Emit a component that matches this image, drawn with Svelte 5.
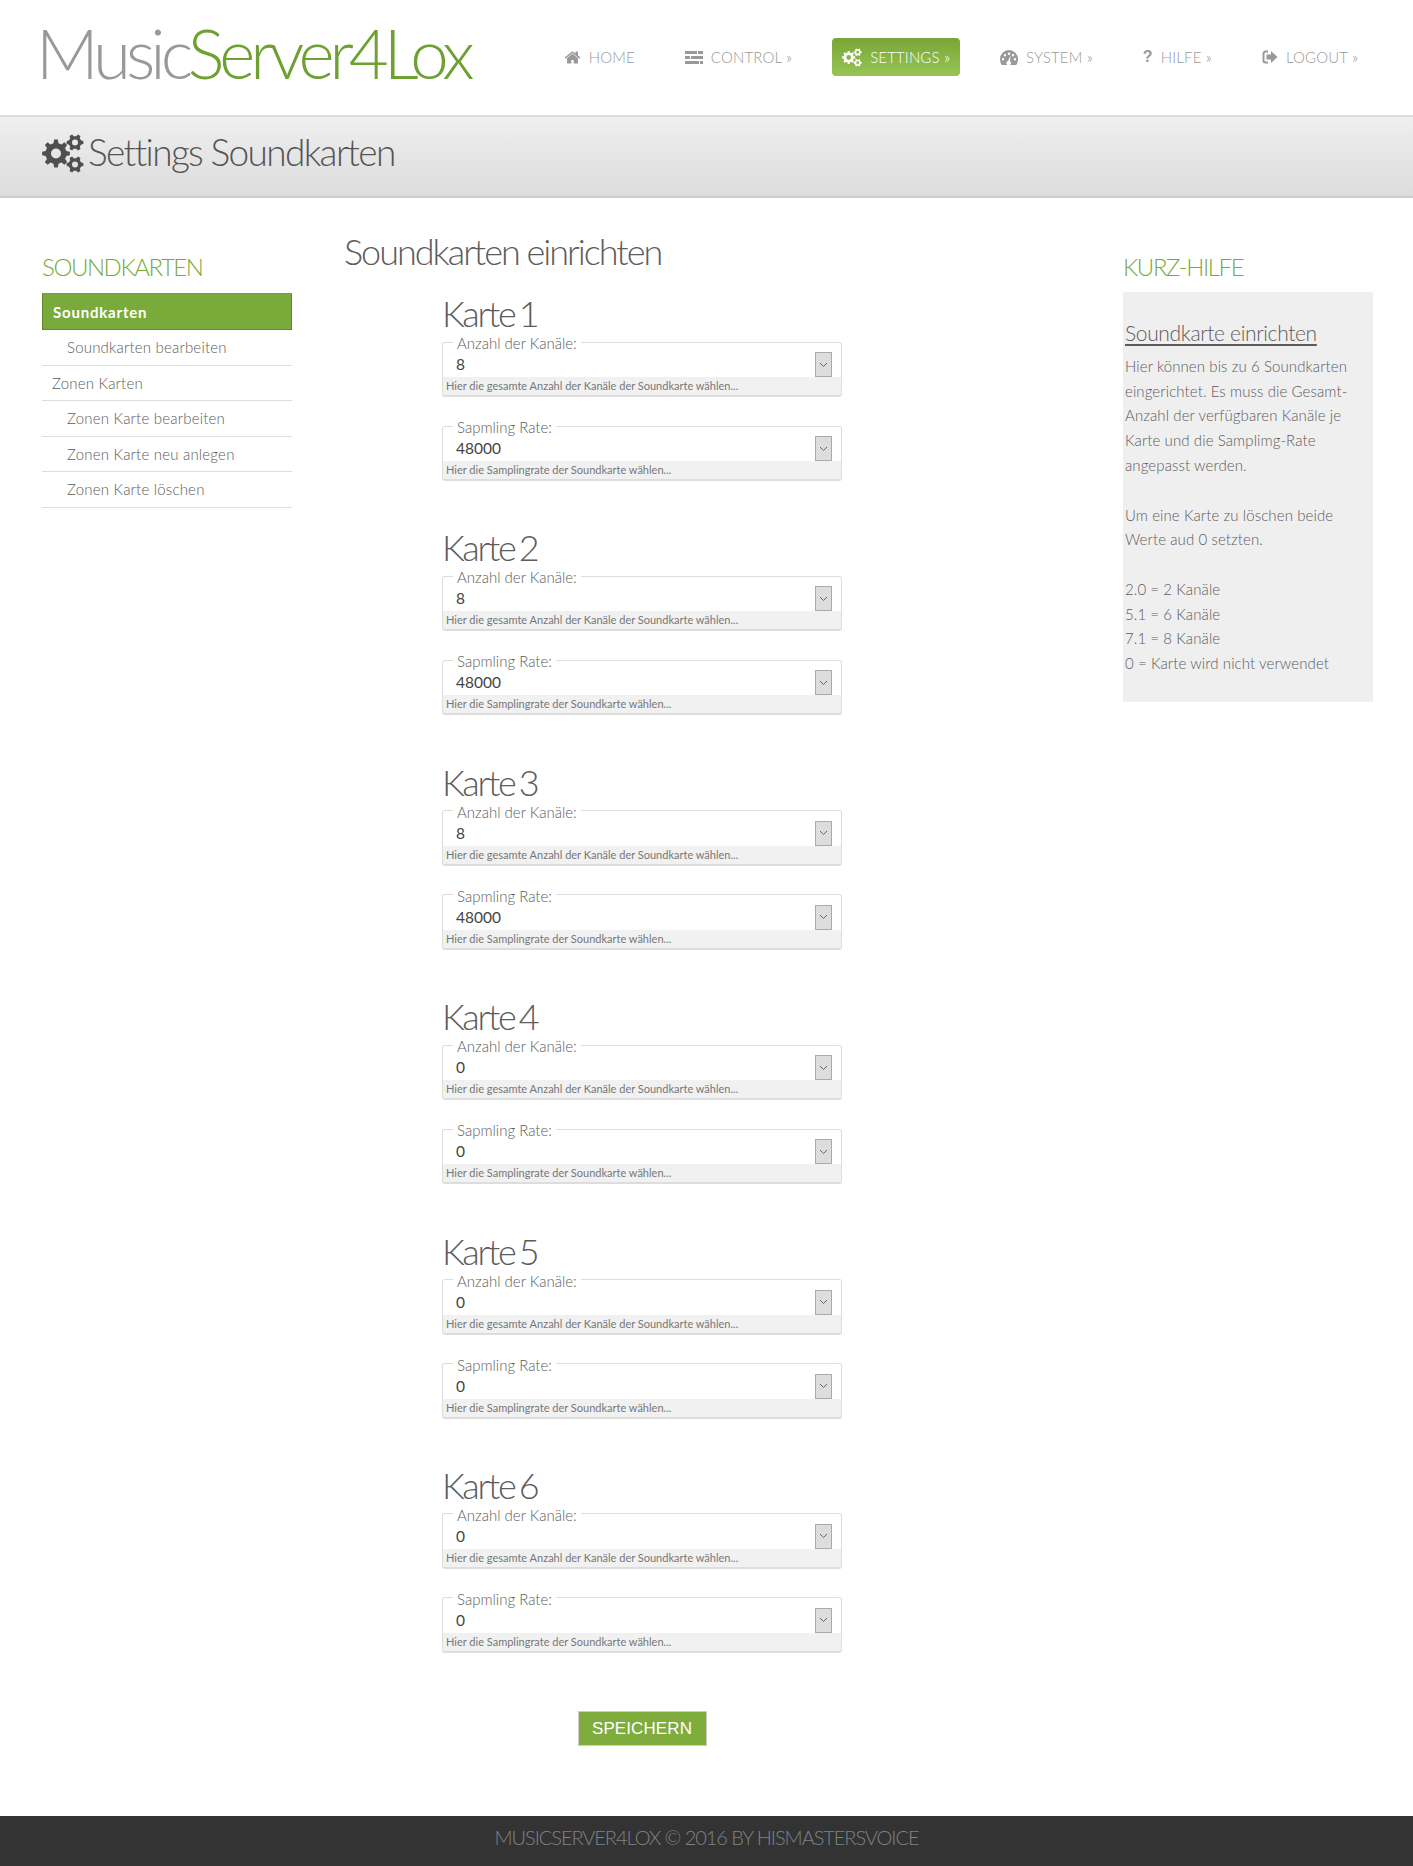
<script>
  const nav = [
    { label: 'HOME', icon: 'home' },
    { label: 'CONTROL »', icon: 'tasks' },
    { label: 'SETTINGS »', icon: 'cogs', active: true },
    { label: 'SYSTEM »', icon: 'dash' },
    { label: 'HILFE »', icon: 'help' },
    { label: 'LOGOUT »', icon: 'out' }
  ];

  const side = [
    { label: 'Soundkarten', cls: 'active' },
    { label: 'Soundkarten bearbeiten', cls: 'sub' },
    { label: 'Zonen Karten', cls: '' },
    { label: 'Zonen Karte bearbeiten', cls: 'sub' },
    { label: 'Zonen Karte neu anlegen', cls: 'sub' },
    { label: 'Zonen Karte löschen', cls: 'sub' }
  ];

  const cards = [
    { n: 1, ch: '8', rate: '48000' },
    { n: 2, ch: '8', rate: '48000' },
    { n: 3, ch: '8', rate: '48000' },
    { n: 4, ch: '0', rate: '0' },
    { n: 5, ch: '0', rate: '0' },
    { n: 6, ch: '0', rate: '0' }
  ];

  // gear outline with a round hole, used for the cogs icon
  function gear(cx, cy, r, hole, teeth = 8) {
    let d = '';
    const step = (Math.PI * 2) / teeth;
    for (let i = 0; i < teeth; i++) {
      const a = i * step;
      const pts = [
        [a - step * 0.3, r * 0.76],
        [a - step * 0.17, r],
        [a + step * 0.17, r],
        [a + step * 0.3, r * 0.76]
      ];
      for (const [t, l] of pts) {
        d += (d ? 'L' : 'M') + (cx + Math.cos(t) * l).toFixed(2) + ' ' + (cy + Math.sin(t) * l).toFixed(2);
      }
    }
    d += 'Z';
    d += `M${cx - hole} ${cy}a${hole} ${hole} 0 1 0 ${hole * 2} 0a${hole} ${hole} 0 1 0 ${-hole * 2} 0Z`;
    return d;
  }

  const cogs = gear(14, 19.5, 14, 5) + gear(33, 8.5, 8.5, 3, 6) + gear(33, 30.5, 8.5, 3, 6);
</script>

{#snippet icon(name)}
  {#if name === 'home'}
    <svg class="ico" viewBox="0 0 1792 1792" width="17" height="17"><path d="M1472 992v480q0 26-19 45t-45 19h-384v-384h-256v384h-384q-26 0-45-19t-19-45v-480q0-1 .5-3t.5-3l575-474 575 474q1 2 1 6zm223-69l-62 74q-8 9-21 11h-3q-13 0-21-7l-692-577-692 577q-12 8-24 7-13-2-21-11l-62-74q-8-10-7-23.500t11-21.500l719-599q32-26 76-26t76 26l244 204v-195q0-14 9-23t23-9h192q14 0 23 9t9 23v408l219 182q10 8 11 21.500t-7 23.500z"/></svg>
  {:else if name === 'tasks'}
    <svg class="ico" viewBox="0 0 18 13" width="18" height="13"><path d="M0 0h12v3H0zM13 0h5v3h-5zM0 5h5v3H0zM6 5h12v3H6zM0 10h14v3H0zM15 10h3v3h-3z"/></svg>
  {:else if name === 'cogs'}
    <svg class="ico" viewBox="0 0 42 39" width="20" height="19"><path fill-rule="evenodd" d={cogs}/></svg>
  {:else if name === 'dash'}
    <svg class="ico" viewBox="0 0 18 15" width="18" height="15"><path fill-rule="evenodd" d="M9 0a9 9 0 0 1 9 9c0 2.200-.6 4.300-1.800 6H1.800C.6 13.300 0 11.200 0 9a9 9 0 0 1 9-9zM3 8a1.200 1.200 0 1 0 0 2.400A1.200 1.200 0 0 0 3 8zm2-4a1.200 1.200 0 1 0 0 2.400A1.200 1.200 0 0 0 5 4zm4-1.500a1.200 1.200 0 1 0 0 2.400 1.200 1.200 0 0 0 0-2.400zM13 4a1.200 1.200 0 1 0 0 2.400A1.200 1.200 0 0 0 13 4zm2 4a1.200 1.200 0 1 0 0 2.400A1.200 1.200 0 0 0 15 8zM10.500 5.500L8 11a2.200 2.200 0 1 0 2 .3z"/></svg>
  {:else if name === 'help'}
    <span class="qmark">?</span>
  {:else if name === 'out'}
    <svg class="ico" viewBox="0 0 16 14" width="16" height="14"><path d="M6 1.500H3.500A2 2 0 0 0 1.500 3.500v7a2 2 0 0 0 2 2H6" fill="none" stroke="currentColor" stroke-width="2"/><path d="M4.500 4.500H9V1l6.500 6L9 13V9.500H4.500z"/></svg>
  {/if}
{/snippet}

{#snippet field(label, value, hint)}
  <fieldset>
    <legend>{label}</legend>
    <div class="select">
      <select><option>{value}</option></select>
      <span class="arrow">
        <svg viewBox="0 0 9 6" width="9" height="6"><path d="M1 1l3.500 3.500L8 1" fill="none" stroke="#666" stroke-width="1"/></svg>
      </span>
    </div>
    <div class="hint">{hint}</div>
  </fieldset>
{/snippet}

<header>
  <div class="logo">Music<span>Server4Lox</span></div>
  <nav>
    {#each nav as item}
      <a href="#top" class:active={item.active}>
        <span class="slot">{@render icon(item.icon)}</span>
        {item.label}
      </a>
    {/each}
  </nav>
</header>

<div class="titlebar">
  <svg viewBox="0 0 42 39" width="42" height="39"><path fill-rule="evenodd" d={cogs}/></svg>
  <h1>Settings Soundkarten</h1>
</div>

<main>
  <aside class="left">
    <h3>SOUNDKARTEN</h3>
    <ul>
      {#each side as row}
        <li class={row.cls}>{row.label}</li>
      {/each}
    </ul>
  </aside>

  <section class="content">
    <h2>Soundkarten einrichten</h2>
    <form>
      {#each cards as card}
        <div class="card">
          <h4>Karte {card.n}</h4>
          {@render field('Anzahl der Kanäle:', card.ch, 'Hier die gesamte Anzahl der Kanäle der Soundkarte wählen...')}
          {@render field('Sapmling Rate:', card.rate, 'Hier die Samplingrate der Soundkarte wählen...')}
        </div>
      {/each}
      <div class="actions"><button type="button">SPEICHERN</button></div>
    </form>
  </section>

  <aside class="right">
    <h3>KURZ-HILFE</h3>
    <div class="helpbox">
      <h5>Soundkarte einrichten</h5>
      <p>Hier können bis zu 6 Soundkarten eingerichtet. Es muss die Gesamt-Anzahl der verfügbaren Kanäle je Karte und die Samplimg-Rate angepasst werden.</p>
      <p>Um eine Karte zu löschen beide Werte aud 0 setzten.</p>
      <p>2.0 = 2 Kanäle<br />5.1 = 6 Kanäle<br />7.1 = 8 Kanäle<br />0 = Karte wird nicht verwendet</p>
    </div>
  </aside>
</main>

<footer>MUSICSERVER4LOX © 2016 BY HISMASTERSVOICE</footer>

<style>
  :global(body) {
    background: #fff;
    color: #5c5c5c;
    font-family: Lato, "Liberation Sans", sans-serif;
    font-weight: 300;
  }
  header {
    height: 115px;
    display: flex;
    align-items: center;
    justify-content: space-between;
    padding: 0 45px 0 36px;
  }
  .logo {
    font-size: 69px;
    letter-spacing: -5px;
    color: #999;
    line-height: 1;
    margin-top: -10px;
  }
  .logo span {
    color: #6fa032;
  }
  nav {
    display: flex;
    align-items: center;
    gap: 30px;
    margin-top: -1px;
  }
  nav a {
    display: flex;
    align-items: center;
    height: 38px;
    padding: 0 10px;
    border-radius: 4px;
    color: #999;
    font-size: 15px;
    letter-spacing: 0.15px;
    text-decoration: none;
    white-space: nowrap;
  }
  nav a.active {
    color: #fff;
    background: linear-gradient(#78a738, #96c554);
  }
  .slot {
    display: flex;
    align-items: center;
    margin-right: 8px;
  }
  .ico {
    fill: currentColor;
    display: block;
  }
  .qmark {
    font: bold 16px "Liberation Sans", sans-serif;
    width: 10px;
    text-align: center;
  }
  .titlebar {
    height: 79px;
    box-sizing: content-box;
    border-top: 2px solid #ddd;
    border-bottom: 2px solid #ccc;
    background: linear-gradient(#efefef, #dcdcdc);
    display: flex;
    align-items: center;
    padding-left: 42px;
    gap: 4px;
    color: #555;
  }
  .titlebar svg {
    fill: #4f4f4f;
    margin-top: -6px;
  }
  h1 {
    margin: -11px 0 0;
    font-size: 37px;
    font-weight: 300;
    letter-spacing: -1.65px;
    color: #555;
  }
  main {
    display: flex;
    align-items: flex-start;
    padding: 0 40px 0 42px;
  }
  .left {
    width: 250px;
    flex: none;
    margin-top: 51px;
  }
  h3 {
    margin: 0;
    height: 44px;
    font-size: 24px;
    font-weight: 300;
    line-height: 36px;
    letter-spacing: -1.45px;
    color: #7aaa3a;
  }
  ul {
    list-style: none;
    margin: 0;
    padding: 0;
  }
  li {
    height: 35.6px;
    box-sizing: border-box;
    padding-left: 10px;
    border-bottom: 1px solid #ddd;
    font-size: 15px;
    line-height: 35px;
    letter-spacing: 0.2px;
  }
  li.sub {
    padding-left: 25px;
  }
  li.active {
    height: 37px;
    border: 1px solid #5f8a2c;
    border-top-color: #888;
    background: #7aaa3a;
    color: #fff;
    font-weight: 700;
    font-size: 15px;
    line-height: 36px;
    letter-spacing: 0.8px;
  }
  .content {
    flex: none;
    width: 779px;
    margin-left: 52px;
  }
  h2 {
    margin: 31px 0 16px;
    font-size: 36px;
    font-weight: 300;
    line-height: 44px;
    letter-spacing: -2px;
  }
  form {
    width: 400px;
    margin-left: 98px;
  }
  .card {
    padding-bottom: 42.4px;
  }
  h4 {
    margin: 0 0 -2px;
    padding-top: 2px;
    font-size: 36px;
    font-weight: 300;
    line-height: 44px;
    letter-spacing: -2.3px;
    word-spacing: -3px;
  }
  fieldset {
    margin: 0;
    padding: 0;
    border: 1px solid #ddd;
    border-bottom-width: 2px;
    border-radius: 3px;
    min-width: 0;
  }
  fieldset + fieldset {
    margin-top: 20px;
  }
  legend {
    margin-left: 10px;
    padding: 2px 4px 0;
    font-size: 15px;
    line-height: 16px;
  }
  .select {
    display: flex;
    align-items: flex-end;
    height: 26px;
    padding-right: 9px;
  }
  select {
    flex: 1;
    align-self: center;
    min-width: 0;
    appearance: none;
    border: 0;
    background: transparent;
    padding: 0 0 0 13px;
    font: 400 15.5px Lato, "Liberation Sans", sans-serif;
    color: #444;
  }
  .arrow {
    width: 15px;
    height: 23px;
    border: 1px solid #aaa;
    background: #ddd;
    display: flex;
    align-items: center;
    justify-content: center;
  }
  .hint {
    height: 18px;
    background: #f1f1f1;
    padding-left: 3px;
    font-size: 11px;
    font-weight: 400;
    line-height: 18px;
    color: #777;
  }
  .actions {
    display: flex;
    justify-content: center;
    margin-top: 16px;
  }
  button {
    width: 129px;
    height: 35px;
    padding: 0;
    border: 1px solid #ccc;
    background: #7eac3d;
    color: #fff;
    font: 17px "Liberation Sans", sans-serif;
    letter-spacing: 0.1px;
  }
  .right {
    width: 250px;
    flex: none;
    margin-top: 51px;
  }
  .right h3 {
    height: 43px;
    letter-spacing: -1.4px;
  }
  .helpbox {
    background: #efefef;
    height: 410px;
    box-sizing: border-box;
    padding: 27px 2px 0;
    font-size: 15px;
    line-height: 24.700px;
    letter-spacing: 0.1px;
  }
  h5 {
    margin: 0 0 7px;
    font-size: 21px;
    font-weight: 300;
    line-height: 28px;
    letter-spacing: -0.35px;
    text-decoration: underline;
    text-underline-offset: 3px;
  }
  p {
    margin: 0 0 25px;
  }
  footer {
    margin-top: 70px;
    height: 50px;
    background: #333;
    color: #7c838a;
    text-align: center;
    font-size: 20px;
    line-height: 42px;
    letter-spacing: -1.07px;
  }
</style>
